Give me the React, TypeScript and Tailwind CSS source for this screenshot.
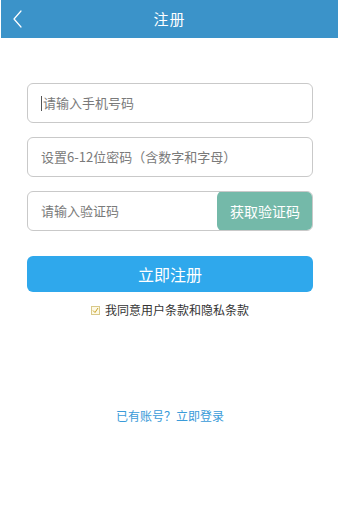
import React from 'react';

const font = { fontFamily: '"Noto Sans CJK SC", "Noto Sans", sans-serif' };

const Field: React.FC<{ placeholder: string; caret?: boolean }> = ({ placeholder, caret }) => (
  <div className="h-[40px] border border-[#c9c9c9] rounded-[6px] flex items-center pl-[13px]">
    {caret && <span className="w-px h-[15px] bg-[#555] mr-px" />}
    <span className="text-[13px] text-[#7a7a7a]">{placeholder}</span>
  </div>
);

export default function App() {
  return (
    <div className="w-[339px] h-[530px] bg-white" style={font}>
      <header className="h-[38px] ml-px mr-px bg-[#3b93c9] flex items-center justify-center relative">
        <svg className="absolute left-[11px] top-[9px]" width="12" height="20" viewBox="0 0 12 20">
          <path d="M9 2 L2 10 L9 18" fill="none" stroke="#fff" strokeWidth="1.2" strokeLinecap="round" strokeLinejoin="round" />
        </svg>
        <h1 className="text-white text-[15px] tracking-[1px]">注册</h1>
      </header>

      <div className="px-[27px] pt-[45px] w-[340px]">
        <div className="flex flex-col gap-[14px] w-[286px]">
          <Field placeholder="请输入手机号码" caret />
          <Field placeholder="设置6-12位密码（含数字和字母）" />
          <div className="h-[40px] border border-[#c9c9c9] rounded-[6px] flex items-center overflow-hidden">
            <span className="flex-1 pl-[13px] text-[13px] text-[#7a7a7a]">请输入验证码</span>
            <button className="h-[40px] -my-px -mr-px w-[96px] bg-[#74b9a9] rounded-[6px] text-white text-[14px]">
              获取验证码
            </button>
          </div>
        </div>

        <button className="mt-[25px] w-[286px] h-[36px] rounded-[6px] bg-[#2fa8ec] text-white text-[16px]">
          立即注册
        </button>

        <div className="w-[286px] mt-[9px] flex items-center justify-center gap-[5px]">
          <span className="w-[9px] h-[9px] border border-[#d9c98a] bg-[#fdf9e6] flex items-center justify-center">
            <svg width="7" height="7" viewBox="0 0 7 7">
              <path d="M1 3.5 L3 5.5 L6 1" fill="none" stroke="#c9a227" strokeWidth="1" />
            </svg>
          </span>
          <span className="text-[12px] text-[#333]">我同意用户条款和隐私条款</span>
        </div>

        <div className="w-[286px] mt-[88px] text-center text-[12px] text-[#3a9bd9]">已有账号？立即登录</div>
      </div>
    </div>
  );
}
